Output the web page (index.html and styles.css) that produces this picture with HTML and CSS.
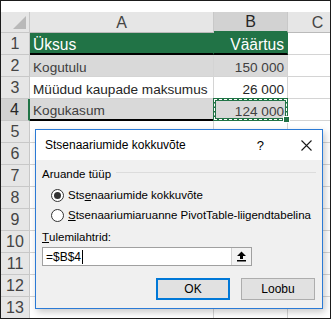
FILE: index.html
```html
<!DOCTYPE html>
<html lang="et">
<head>
    <meta charset="UTF-8">
    <title>Stsenaariumide kokkuvõte</title>
    <link rel="stylesheet" href="styles.css">
</head>
<body>
    <div class="window">
        <div class="topstrip"></div>
        <div class="sheet">
            <div class="hd corner"><span class="tri"></span></div>
            <div class="hd col">A</div>
            <div class="hd col sel">B</div>
            <div class="hd col">C</div>

            <div class="hd row">1</div>
            <div class="c green">Üksus</div>
            <div class="c green num">Väärtus</div>
            <div class="c"></div>

            <div class="hd row">2</div>
            <div class="c fill">Kogutulu</div>
            <div class="c fill num">150 000</div>
            <div class="c"></div>

            <div class="hd row">3</div>
            <div class="c dark">Müüdud kaupade maksumus</div>
            <div class="c dark num">26 000</div>
            <div class="c"></div>

            <div class="hd row sel">4</div>
            <div class="c fill total">Kogukasum</div>
            <div class="c fill num ants">124 000</div>
            <div class="c"></div>

            <div class="hd row">5</div><div class="c"></div><div class="c"></div><div class="c"></div>
            <div class="hd row">6</div><div class="c"></div><div class="c"></div><div class="c"></div>
            <div class="hd row">7</div><div class="c"></div><div class="c"></div><div class="c"></div>
            <div class="hd row">8</div><div class="c"></div><div class="c"></div><div class="c"></div>
            <div class="hd row">9</div><div class="c"></div><div class="c"></div><div class="c"></div>
            <div class="hd row">10</div><div class="c"></div><div class="c"></div><div class="c"></div>
            <div class="hd row">11</div><div class="c"></div><div class="c"></div><div class="c"></div>
            <div class="hd row">12</div><div class="c"></div><div class="c"></div><div class="c"></div>
            <div class="hd row">13</div><div class="c"></div><div class="c"></div><div class="c"></div>
        </div>

        <div class="dialog">
            <div class="titlebar">
                <span class="title">Stsenaariumide kokkuvõte</span>
                <span class="help">?</span>
                <svg class="close" width="11" height="11" viewBox="0 0 11 11">
                    <path d="M0.5 0.5 L10.5 10.5 M10.5 0.5 L0.5 10.5" stroke="#1a1a1a" stroke-width="1.1" fill="none"/>
                </svg>
            </div>
            <div class="body">
                <div class="group">
                    <span>Aruande tüüp</span>
                    <span class="line"></span>
                </div>
                <label class="radio">
                    <span class="dot on"></span>
                    <span>Sts<u>e</u>naariumide kokkuvõte</span>
                </label>
                <label class="radio">
                    <span class="dot"></span>
                    <span><u>S</u>tsenaariumiaruanne PivotTable-liigendtabelina</span>
                </label>
                <div class="fieldlabel"><u>T</u>ulemilahtrid:</div>
                <div class="input">
                    <span class="value">=$B$4<span class="caret"></span></span>
                    <span class="pick">
                        <svg width="11" height="11" viewBox="0 0 11 11">
                            <path d="M5.5 0.5 L10 5 L7 5 L7 8 L4 8 L4 5 L1 5 Z" fill="#000"/>
                            <rect x="1" y="9" width="9" height="1.5" fill="#000"/>
                        </svg>
                    </span>
                </div>
                <div class="buttons">
                    <button class="btn default">OK</button>
                    <button class="btn">Loobu</button>
                </div>
            </div>
        </div>
    </div>
</body>
</html>
```

FILE: styles.css
```css
body{
    margin: 0;
    background: #fff;
}
.window{
    position: relative;
    box-sizing: border-box;
    width: 331px;
    height: 319px;
    border: 1px solid #1b1b1b;
    overflow: hidden;
    background: #fff;
    font-family: "Liberation Sans", Arial, sans-serif;
}
.topstrip{
    height: 11px;
}
.sheet{
    display: grid;
    grid-template-columns: 29px 184px 74px 60px;
    grid-template-rows: 21px repeat(13, 22px);
}
.hd{
    box-sizing: border-box;
    background: #e6e6e6;
    color: #444;
    font-size: 16px;
    display: flex;
    align-items: center;
    justify-content: center;
    border-right: 1px solid #c8c8c8;
    border-bottom: 1px solid #c8c8c8;
}
.hd.col{
    border-bottom-color: #bababa;
    padding-top: 1px;
}
.hd.col.sel{
    background: #d2d2d2;
    color: #262626;
    border-bottom: 2px solid #217346;
}
.hd.row{
    padding-top: 1px;
}
.hd.row.sel{
    background: #d2d2d2;
    color: #262626;
    border-right: 2px solid #217346;
}
.corner{
    position: relative;
}
.corner .tri{
    position: absolute;
    right: 3px;
    bottom: 3px;
    width: 0;
    height: 0;
    border-left: 13px solid transparent;
    border-bottom: 13px solid #b9b9b9;
}
.c{
    box-sizing: border-box;
    border-right: 1px solid #d4d4d4;
    border-bottom: 1px solid #d4d4d4;
    font-size: 13.6px;
    color: #404040;
    padding: 3px 3px 0 3px;
    white-space: nowrap;
    display: flex;
    align-items: center;
}
.c.num{
    justify-content: flex-end;
}
.c.green{
    background: #217346;
    color: #fff;
    font-size: 15.6px;
    border-right-color: #217346;
    border-bottom: 2px solid #000;
}
.c.fill{
    background: #d9d9d9;
}
.c.dark{
    color: #262626;
}
.c.total{
    border-bottom: 2px solid #000;
}
.c.ants{
    position: relative;
    border-color: transparent;
}
.c.ants::before{
    content: "";
    position: absolute;
    left: -1px;
    top: -1px;
    right: -1px;
    bottom: -1px;
    border: 3px solid #217346;
    outline: 1px dashed #fff;
    outline-offset: -2px;
}
.c.ants::after{
    content: "";
    position: absolute;
    right: -3px;
    bottom: -3px;
    width: 5px;
    height: 5px;
    background: #217346;
    border: 1px solid #fff;
}

.dialog{
    position: absolute;
    left: 34px;
    top: 128px;
    box-sizing: border-box;
    width: 288px;
    height: 180px;
    border: 1px solid #2b7ad5;
    background: #f0f0f0;
    box-shadow: 2px 3px 7px rgba(0, 0, 0, 0.22);
    display: flex;
    flex-direction: column;
    color: #000;
}
.titlebar{
    height: 30px;
    background: #fff;
    display: flex;
    align-items: center;
    padding: 0 10px 0 9px;
    font-size: 12px;
}
.title{
    flex: 1;
}
.help{
    font-size: 13px;
    margin-right: 37px;
}
.close{
    display: block;
}
.body{
    flex: 1;
    display: flex;
    flex-direction: column;
    padding: 0 6px;
    font-size: 11.5px;
}
.group{
    display: flex;
    align-items: center;
    height: 14px;
    margin-top: 7px;
}
.group .line{
    flex: 1;
    height: 1px;
    background: #dcdcdc;
    margin: 0 0 3px 5px;
}
.radio{
    display: flex;
    align-items: center;
    height: 20px;
    padding-left: 9px;
}
.radio:first-of-type{
    margin-top: 4px;
}
.dot{
    box-sizing: border-box;
    width: 13px;
    height: 13px;
    border: 1px solid #333;
    border-radius: 50%;
    background: #fff;
    margin-right: 4px;
    display: flex;
    align-items: center;
    justify-content: center;
}
.dot.on::after{
    content: "";
    width: 7px;
    height: 7px;
    border-radius: 50%;
    background: #333;
}
.fieldlabel{
    height: 14px;
    margin-top: 5px;
    display: flex;
    align-items: center;
}
.input{
    box-sizing: border-box;
    width: 210px;
    height: 19px;
    margin-top: 3px;
    border: 1px solid #a0a0a0;
    background: #fff;
    display: flex;
}
.input .value{
    flex: 1;
    display: flex;
    align-items: center;
    padding-left: 3px;
    font-size: 12px;
}
.caret{
    display: inline-block;
    width: 1px;
    height: 14px;
    background: #000;
    margin-left: 1px;
}
.pick{
    width: 19px;
    border-left: 1px solid #d0d0d0;
    background: #f3f3f3;
    display: flex;
    align-items: center;
    justify-content: center;
}
.buttons{
    display: flex;
    justify-content: flex-end;
    gap: 11px;
    margin-top: 12px;
    padding-right: 1px;
}
.btn{
    box-sizing: border-box;
    width: 74px;
    height: 22px;
    border: 1px solid #adadad;
    background: #e1e1e1;
    font-family: "Liberation Sans", Arial, sans-serif;
    font-size: 12px;
    color: #000;
    padding: 0;
}
.btn.default{
    border: 2px solid #0078d7;
}
```
